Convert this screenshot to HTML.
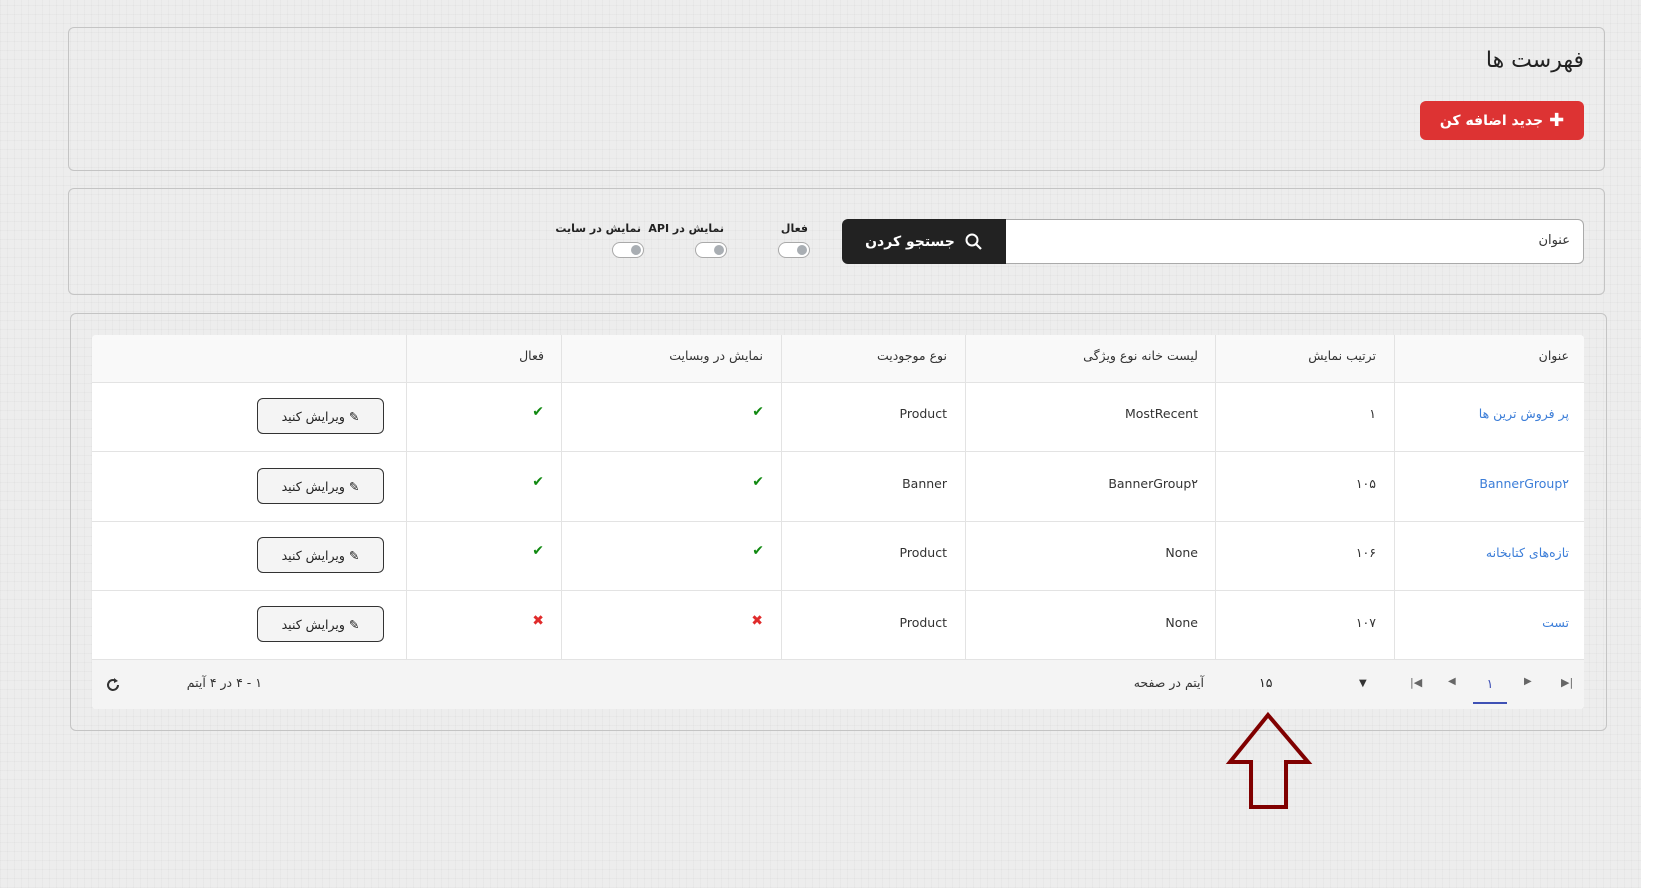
<!DOCTYPE html>
<html><head><meta charset="utf-8"><style>
*{box-sizing:border-box;margin:0;padding:0}
body{width:1665px;height:888px;background:#fff;position:relative;overflow:hidden;font-family:"DejaVu Sans","Liberation Sans",sans-serif;color:#222;font-size:12.5px}
.bg{position:absolute;left:0;top:0;width:1641px;height:888px;background:#ededed;background-image:repeating-linear-gradient(90deg,rgba(0,0,0,.025) 0 1px,transparent 1px 7px),repeating-linear-gradient(0deg,rgba(0,0,0,.025) 0 1px,transparent 1px 9px)}
.a{position:absolute}
.card{position:absolute;border:1px solid #c4c4c4;border-radius:6px}
.r{direction:rtl;white-space:nowrap}
.tog{position:absolute;width:32px;height:16px;border:1px solid #aaa;border-radius:8px;background:#fff}
.tog:after{content:"";position:absolute;right:2px;top:2px;width:10px;height:10px;border-radius:50%;background:#a9aeb3}
.th,.td{position:absolute;text-align:right;direction:rtl;white-space:nowrap;color:#333}
.vl{position:absolute;width:1px;background:#e3e3e3}
.hl{position:absolute;height:1px;background:#e3e3e3;left:92px;width:1492px}
.eb{position:absolute;left:257px;width:127px;height:36px;border:1px solid #333;border-radius:6px;background:#f4f4f4;display:flex;align-items:center;justify-content:center;direction:rtl;font-size:12.5px;gap:5px}
.ok{color:#118a11;font-weight:bold;font-size:14px}
.x{color:#e02b2b;font-weight:bold;font-size:14px}
.lbl{font-size:11px;font-weight:bold}
</style></head><body>
<div class="bg"></div>
<div class="card" style="left:68px;top:27px;width:1537px;height:144px"></div>
<div class="a r" style="right:81px;top:48px;font-size:22px;color:#222">فهرست ها</div>
<div class="a r" style="left:1420px;top:101px;width:164px;height:39px;background:#dd3333;border-radius:6px;color:#fff;font-weight:bold;font-size:14px;display:flex;align-items:center;justify-content:center;gap:6px"><span style="font-size:18px">✚</span>جدید اضافه کن</div>

<div class="card" style="left:68px;top:188px;width:1537px;height:107px"></div>
<div class="a" style="left:1006px;top:219px;width:578px;height:45px;background:#fff;border:1px solid #aaa;border-left:none;border-radius:0 6px 6px 0"></div>
<div class="a r" style="right:95px;top:233px;font-size:13px;color:#333">عنوان</div>
<div class="a r" style="left:842px;top:219px;width:164px;height:45px;background:#222;border-radius:6px 0 0 6px;color:#fff;font-weight:bold;font-size:14px;display:flex;align-items:center;justify-content:center;gap:10px">
<svg width="18" height="18" viewBox="0 0 18 18"><circle cx="7" cy="7" r="5.5" fill="none" stroke="#fff" stroke-width="2"/><path d="M11 11l5 5" stroke="#fff" stroke-width="2.2"/></svg>جستجو کردن</div>
<div class="a r lbl" style="right:857px;top:222px">فعال</div>
<div class="tog" style="left:778px;top:242px"></div>
<div class="a r lbl" style="right:941px;top:222px">نمایش در API</div>
<div class="tog" style="left:695px;top:242px"></div>
<div class="a r lbl" style="right:1024px;top:222px">نمایش در سایت</div>
<div class="tog" style="left:612px;top:242px"></div>

<div class="card" style="left:70px;top:313px;width:1537px;height:418px"></div>
<div class="a" style="left:92px;top:335px;width:1492px;height:374px;background:#fff;border-radius:4px"></div>
<div class="a" style="left:92px;top:335px;width:1492px;height:47px;background:#f9f9f9;border-radius:4px 4px 0 0"></div>
<div class="a" style="left:92px;top:659px;width:1492px;height:50px;background:#f4f4f4;border-radius:0 0 4px 4px"></div>
<div class="hl" style="top:382px"></div><div class="hl" style="top:451px"></div><div class="hl" style="top:521px"></div><div class="hl" style="top:590px"></div><div class="hl" style="top:659px"></div>
<div class="vl" style="left:1394px;top:335px;height:324px"></div>
<div class="vl" style="left:1215px;top:335px;height:324px"></div>
<div class="vl" style="left:965px;top:335px;height:324px"></div>
<div class="vl" style="left:781px;top:335px;height:324px"></div>
<div class="vl" style="left:561px;top:335px;height:324px"></div>
<div class="vl" style="left:406px;top:335px;height:324px"></div>

<div class="th" style="right:96px;top:348px">عنوان</div>
<div class="th" style="right:289px;top:348px">ترتیب نمایش</div>
<div class="th" style="right:467px;top:348px">لیست خانه نوع ویژگی</div>
<div class="th" style="right:718px;top:348px">نوع موجودیت</div>
<div class="th" style="right:902px;top:348px">نمایش در وبسایت</div>
<div class="th" style="right:1121px;top:348px">فعال</div>

<div class="td" style="right:96px;top:406px;color:#3b7dd8">پر فروش ترین ها</div>
<div class="td" style="right:289px;top:406px">۱</div>
<div class="td" style="right:467px;top:406px">MostRecent</div>
<div class="td" style="right:718px;top:406px">Product</div>
<div class="td ok" style="right:901px;top:404px">✔</div>
<div class="td ok" style="right:1121px;top:404px">✔</div>
<div class="eb" style="top:398px">✎ ویرایش کنید</div>

<div class="td" style="right:96px;top:476px;color:#3b7dd8">BannerGroup۲</div>
<div class="td" style="right:289px;top:476px">۱۰۵</div>
<div class="td" style="right:467px;top:476px">BannerGroup۲</div>
<div class="td" style="right:718px;top:476px">Banner</div>
<div class="td ok" style="right:901px;top:474px">✔</div>
<div class="td ok" style="right:1121px;top:474px">✔</div>
<div class="eb" style="top:468px">✎ ویرایش کنید</div>

<div class="td" style="right:96px;top:545px;color:#3b7dd8">تازه‌های کتابخانه</div>
<div class="td" style="right:289px;top:545px">۱۰۶</div>
<div class="td" style="right:467px;top:545px">None</div>
<div class="td" style="right:718px;top:545px">Product</div>
<div class="td ok" style="right:901px;top:543px">✔</div>
<div class="td ok" style="right:1121px;top:543px">✔</div>
<div class="eb" style="top:537px">✎ ویرایش کنید</div>

<div class="td" style="right:96px;top:615px;color:#3b7dd8">تست</div>
<div class="td" style="right:289px;top:615px">۱۰۷</div>
<div class="td" style="right:467px;top:615px">None</div>
<div class="td" style="right:718px;top:615px">Product</div>
<div class="td x" style="right:902px;top:613px">✖</div>
<div class="td x" style="right:1121px;top:613px">✖</div>
<div class="eb" style="top:606px">✎ ویرایش کنید</div>

<div class="a" style="left:1561px;top:676px;color:#666;font-size:11px">▶|</div>
<div class="a" style="left:1524px;top:676px;color:#666;font-size:10px">▶</div>
<div class="a" style="left:1473px;top:663px;width:34px;height:41px;border-bottom:2px solid #3f51b5;text-align:center;padding-top:13px;color:#3f51b5">۱</div>
<div class="a" style="left:1448px;top:676px;color:#666;font-size:10px">◀</div>
<div class="a" style="left:1410px;top:676px;color:#666;font-size:11px">|◀</div>
<div class="a" style="left:1359px;top:678px;color:#333;font-size:10px">▼</div>
<div class="a" style="left:1259px;top:675px">۱۵</div>
<div class="a r" style="right:461px;top:675px;color:#333">آیتم در صفحه</div>
<div class="a r" style="right:1403px;top:675px;color:#333">۱ - ۴ در ۴ آیتم</div>
<svg class="a" style="left:104px;top:676px" width="18" height="18" viewBox="0 0 18 18"><path d="M14 9a5 5 0 1 1-2-4" fill="none" stroke="#333" stroke-width="2"/><path d="M10 2l4 3-4 2z" fill="#333"/></svg>

<svg class="a" style="left:0;top:0" width="1665" height="888"><path d="M1268 715 L1230 762 L1251 762 L1251 807 L1286 807 L1286 762 L1308 762 Z" fill="none" stroke="#800000" stroke-width="4" stroke-linejoin="miter"/></svg>
</body></html>
